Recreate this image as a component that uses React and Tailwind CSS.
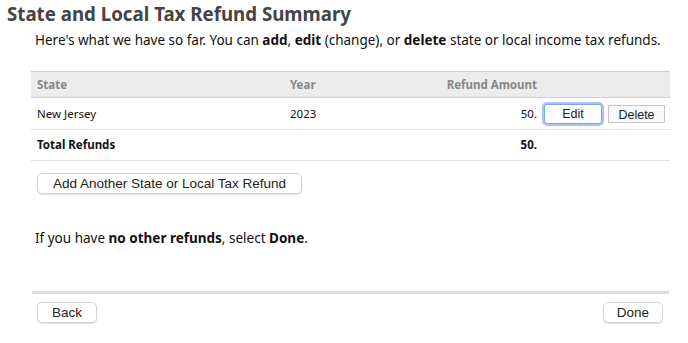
export default function App() {
  const body = { fontFamily: '"Noto Sans", "DejaVu Sans", sans-serif' };
  const btn = { fontFamily: '"Liberation Sans", Arial, sans-serif' };

  return (
    <div className="w-[688px] h-[343px] bg-white overflow-hidden text-[#111]" style={body}>
      <h1 className="pl-[7px] pt-[1px] text-[18.7px] font-bold leading-[26px] text-[#444]">
        State and Local Tax Refund Summary
      </h1>
      <p className="pl-[35px] mt-[4px] text-[13.5px] leading-[18px]">
        Here's what we have so far. You can <b>add</b>, <b>edit</b> (change), or <b>delete</b> state or local income tax refunds.
      </p>

      <div className="ml-[31px] mr-[18px] mt-[22px] text-[11.5px]">
        {/* header */}
        <div className="flex items-center h-[27px] bg-[#ececec] border-t border-b border-[#cfcfcf] font-bold text-[#888]">
          <div className="w-[259px] pl-[6px]">State</div>
          <div className="w-[154px]">Year</div>
          <div className="w-[93px] text-right">Refund Amount</div>
        </div>
        {/* row */}
        <div className="flex items-center h-[32px] border-b border-[#e2e2e2]">
          <div className="w-[259px] pl-[6px]">New Jersey</div>
          <div className="w-[154px]">2023</div>
          <div className="w-[93px] text-right">50.</div>
          <button
            className="ml-[7px] w-[58px] h-[20px] bg-white border border-[#7aa7e6] rounded-[3px] shadow-[0_0_0_2px_#a9c6f2] text-[12.5px] text-[#222]"
            style={btn}
          >
            Edit
          </button>
          <button
            className="ml-[6px] w-[57px] h-[18px] bg-[#fafafa] border border-[#c4c4c4] text-[12.5px] text-[#222]"
            style={btn}
          >
            Delete
          </button>
        </div>
        {/* total */}
        <div className="flex items-center h-[31px] border-b border-[#e2e2e2] font-bold">
          <div className="w-[259px] pl-[6px]">Total Refunds</div>
          <div className="w-[154px]"></div>
          <div className="w-[93px] text-right">50.</div>
        </div>
      </div>

      <div className="flex pl-[37px] mt-[12px]">
        <button
          className="w-[265px] h-[21px] bg-white border border-[#d4d4d4] rounded-[5px] shadow-[0_1px_1px_rgba(0,0,0,0.12)] text-[13.5px] text-[#222]"
          style={btn}
        >
          Add Another State or Local Tax Refund
        </button>
      </div>

      <p className="pl-[35px] mt-[35px] text-[13.5px] leading-[18px]">
        If you have <b>no other refunds</b>, select <b>Done</b>.
      </p>

      <div className="ml-[32px] mr-[19px] mt-[44px] h-[3px] bg-[#dcdcdc]" />

      <div className="flex justify-between pl-[37px] pr-[25px] mt-[8px]">
        <button
          className="w-[60px] h-[21px] bg-white border border-[#d4d4d4] rounded-[5px] shadow-[0_1px_1px_rgba(0,0,0,0.12)] text-[13.5px] text-[#222]"
          style={btn}
        >
          Back
        </button>
        <button
          className="w-[60px] h-[21px] bg-white border border-[#d4d4d4] rounded-[5px] shadow-[0_1px_1px_rgba(0,0,0,0.12)] text-[13.5px] text-[#222]"
          style={btn}
        >
          Done
        </button>
      </div>
    </div>
  );
}
